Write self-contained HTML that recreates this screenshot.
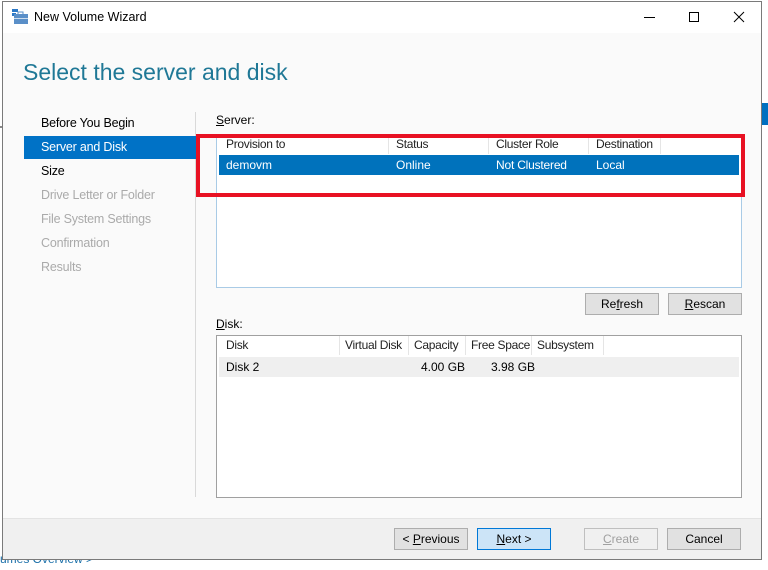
<!DOCTYPE html>
<html><head><style>
*{margin:0;padding:0;box-sizing:border-box}
body{width:768px;height:565px;background:#fff;font-family:"Liberation Sans","DejaVu Sans",sans-serif;font-size:12px;color:#000;position:relative;overflow:hidden}
.a{position:absolute;white-space:nowrap}
.win{left:2px;top:1px;width:760px;height:559px;border:1px solid #7a7a7a;background:#fafafa}
.btn{position:absolute;height:22px;border:1px solid #adadad;background:#e1e1e1;text-align:center;line-height:20px;font-size:12px}
.hd{position:absolute;top:0;height:19px;line-height:19px;border-right:1px solid #e5e5e5;padding-left:7px;color:#222;white-space:nowrap;overflow:hidden;letter-spacing:-0.3px}
.nav{position:absolute;left:21px;width:173px;height:23px;line-height:23px;padding-left:17px;font-size:12.5px;letter-spacing:-0.2px}
</style></head><body>
<div class="a" style="left:0;top:126px;width:3px;height:2px;background:#888"></div>
<div class="a" style="left:762px;top:103px;width:6px;height:22px;background:#0070c0"></div>
<div class="a" style="left:0;top:548px;width:100px;height:17px;color:#1a6fa8;font-size:12px;line-height:22px">umes Overview &gt;</div>
<div class="a win">
 <div class="a" style="left:0;top:0;width:758px;height:31px;background:#fff"></div>
 <svg class="a" style="left:9px;top:7px" width="17" height="16"><rect x="0" y="0" width="6" height="3" fill="#2b78c6"/><rect x="0" y="4" width="4" height="3" fill="#2b78c6"/><rect x="2" y="5" width="14" height="10" fill="#5a8fc8"/><rect x="6" y="3" width="5" height="3" fill="none" stroke="#5a8fc8"/><rect x="2" y="9" width="14" height="1" fill="#cde"/></svg>
 <div class="a" style="left:31px;top:8px;font-size:12.5px">New Volume Wizard</div>
 <div class="a" style="left:641px;top:15px;width:11px;height:1px;background:#000"></div>
 <div class="a" style="left:686px;top:10px;width:10px;height:10px;border:1px solid #000"></div>
 <svg class="a" style="left:730px;top:9px" width="12" height="12"><path d="M1 1L11 11M11 1L1 11" stroke="#000" stroke-width="1"/></svg>
 <div class="a" style="left:20px;top:57px;font-size:23px;color:#1f7896">Select the server and disk</div>
 <div class="a" style="left:192px;top:110px;width:1px;height:385px;background:#d9d9d9"></div>
 <div class="nav" style="top:110px">Before You Begin</div>
 <div class="nav" style="top:134px;background:#0072c6;color:#fff">Server and Disk</div>
 <div class="nav" style="top:158px">Size</div>
 <div class="nav" style="top:182px;color:#aaa">Drive Letter or Folder</div>
 <div class="nav" style="top:206px;color:#aaa">File System Settings</div>
 <div class="nav" style="top:230px;color:#aaa">Confirmation</div>
 <div class="nav" style="top:254px;color:#aaa">Results</div>
 <div class="a" style="left:213px;top:111px"><u>S</u>erver:</div>
 <div class="a" style="left:213px;top:132px;width:526px;height:154px;border:1px solid #a9cbe6;background:#fff">
  <div class="hd" style="left:2px;width:170px">Provision to</div>
  <div class="hd" style="left:172px;width:100px">Status</div>
  <div class="hd" style="left:272px;width:100px">Cluster Role</div>
  <div class="hd" style="left:372px;width:72px">Destination</div>
  <div class="a" style="left:2px;top:20px;width:520px;height:20px;background:#0072bc;color:#fff;line-height:20px">
   <span class="a" style="left:7px">demovm</span><span class="a" style="left:177px">Online</span><span class="a" style="left:277px;letter-spacing:-0.2px">Not Clustered</span><span class="a" style="left:377px">Local</span></div>
 </div>
 <div class="btn" style="left:582px;top:291px;width:74px">Re<u>f</u>resh</div>
 <div class="btn" style="left:665px;top:291px;width:74px"><u>R</u>escan</div>
 <div class="a" style="left:213px;top:315px"><u>D</u>isk:</div>
 <div class="a" style="left:213px;top:333px;width:526px;height:163px;border:1px solid #a0a0a0;background:#fff">
  <div class="hd" style="left:2px;width:121px">Disk</div>
  <div class="hd" style="left:123px;width:69px;padding-left:5px">Virtual Disk</div>
  <div class="hd" style="left:192px;width:57px;padding-left:5px">Capacity</div>
  <div class="hd" style="left:249px;width:66px;padding-left:5px">Free Space</div>
  <div class="hd" style="left:315px;width:72px;padding-left:5px">Subsystem</div>
  <div class="a" style="left:2px;top:21px;width:520px;height:20px;background:#efefef;line-height:20px">
   <span class="a" style="left:7px">Disk 2</span><span class="a" style="left:202px">4.00 GB</span><span class="a" style="left:272px">3.98 GB</span></div>
 </div>
 <div class="a" style="left:0;top:516px;width:758px;height:41px;background:#f0f0f0;border-top:1px solid #e3e3e3"></div>
 <div class="btn" style="left:391px;top:526px;width:74px">&lt; <u>P</u>revious</div>
 <div class="btn" style="left:474px;top:526px;width:74px;background:#cce4f7;border-color:#0078d7"><u>N</u>ext &gt;</div>
 <div class="btn" style="left:581px;top:526px;width:74px;background:#f0f0f0;border-color:#bfbfbf;color:#a0a0a0"><u>C</u>reate</div>
 <div class="btn" style="left:664px;top:526px;width:74px">Cancel</div>
</div>
<div class="a" style="left:196px;top:134px;width:549px;height:63px;border:4px solid #e81123"></div>
</body></html>
